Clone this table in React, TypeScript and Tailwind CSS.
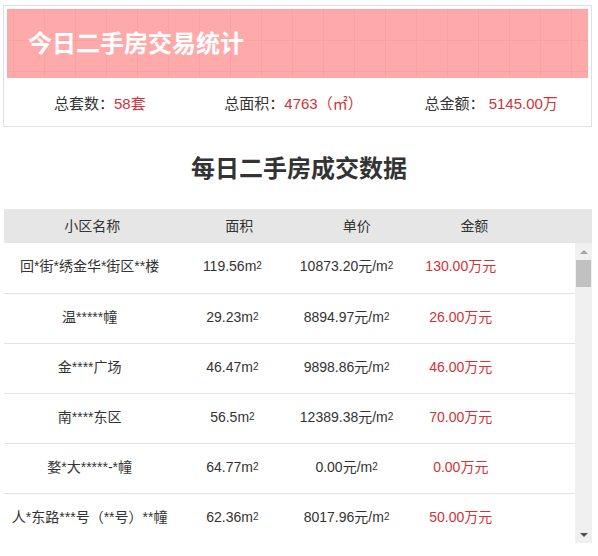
import React from "react";

const FONT = { fontFamily: '"Liberation Sans", Arial, "Noto Sans CJK SC", sans-serif' };

type Deal = { name: string; area: string; price: string; amount: string };

const DEALS: Deal[] = [
  { name: "回*街*绣金华*街区**楼", area: "119.56", price: "10873.20", amount: "130.00" },
  { name: "温*****幢", area: "29.23", price: "8894.97", amount: "26.00" },
  { name: "金****广场", area: "46.47", price: "9898.86", amount: "46.00" },
  { name: "南****东区", area: "56.5", price: "12389.38", amount: "70.00" },
  { name: "婺*大*****-*幢", area: "64.77", price: "0.00", amount: "0.00" },
  { name: "人*东路***号（**号）**幢", area: "62.36", price: "8017.96", amount: "50.00" },
];

function Sq() {
  return (
    <>
      m<sup className="relative -top-[2px] text-[10px]">2</sup>
    </>
  );
}

function Scrollbar() {
  return (
    <div className="flex w-[17px] shrink-0 flex-col bg-[#f0f0f0]">
      <div className="flex h-[17px] items-center justify-center">
        <span className="h-0 w-0 border-x-[4px] border-b-[4px] border-x-transparent border-b-[#a3a3a3]" />
      </div>
      <div className="mx-[1px] h-[27px] bg-[#c1c1c1]" />
      <div className="flex-1" />
      <div className="flex h-[17px] items-center justify-center">
        <span className="h-0 w-0 border-x-[4px] border-t-[4px] border-x-transparent border-t-[#505050]" />
      </div>
    </div>
  );
}

export default function App() {
  return (
    <div className="h-[556px] w-[598px] bg-white text-[#333]" style={FONT}>
      <div className="pl-[3px] pr-[6px] pt-[5px]">
        <section className="border border-[#dfdfe8] p-[3px] pb-0">
          <div className="flex h-[69px] items-center bg-[#ffaaaa] bg-[linear-gradient(rgba(215,110,110,0.12)_1px,transparent_1px),linear-gradient(90deg,rgba(215,110,110,0.12)_1px,transparent_1px)] bg-[size:31px_31px] bg-[position:6px_0px] pl-[21px]">
            <h1 className="mt-[1px] text-[24px] font-bold text-white">今日二手房交易统计</h1>
          </div>
          <div className="grid h-[48px] grid-cols-3 items-center pt-[4px] text-[15px]">
            <p className="pr-[8px] text-center">
              总套数：<span className="text-[#d0333a]">58套</span>
            </p>
            <p className="pr-[8px] text-center">
              总面积：<span className="text-[#d0333a]">4763（㎡）</span>
            </p>
            <p className="text-center">
              总金额： <span className="text-[#d0333a]">5145.00万</span>
            </p>
          </div>
        </section>
      </div>

      <h2 className="mt-[26px] text-center text-[24px] font-bold leading-[32px] text-[#333]">
        每日二手房成交数据
      </h2>

      <div className="ml-[4px] mt-[24px] w-[588px]">
        <table className="w-full table-fixed bg-[#e6e6e6] text-[14px]">
          <thead>
            <tr className="h-[34px]">
              <th className="w-[30%] font-normal">小区名称</th>
              <th className="w-[20%] font-normal">面积</th>
              <th className="w-[20%] font-normal">单价</th>
              <th className="w-[20%] font-normal">金额</th>
              <th className="w-[10%]" />
            </tr>
          </thead>
        </table>

        <div className="flex h-[300px]">
          <div className="h-full flex-1 overflow-y-auto [scrollbar-width:none]">
            <table className="w-full table-fixed text-[14px]">
              <tbody>
                {DEALS.map((d, i) => (
                  <tr key={i} className="h-[50px] border-b border-[#e3e3e3]">
                    <td className="w-[30%] pb-[2px] text-center">{d.name}</td>
                    <td className="w-[20%] pb-[2px] text-center">
                      {d.area}
                      <Sq />
                    </td>
                    <td className="w-[20%] pb-[2px] text-center">
                      {d.price}元/
                      <Sq />
                    </td>
                    <td className="w-[20%] pb-[2px] text-center text-[#d0333a]">{d.amount}万元</td>
                    <td className="w-[10%]" />
                  </tr>
                ))}
              </tbody>
            </table>
          </div>
          <Scrollbar />
        </div>
      </div>
    </div>
  );
}
